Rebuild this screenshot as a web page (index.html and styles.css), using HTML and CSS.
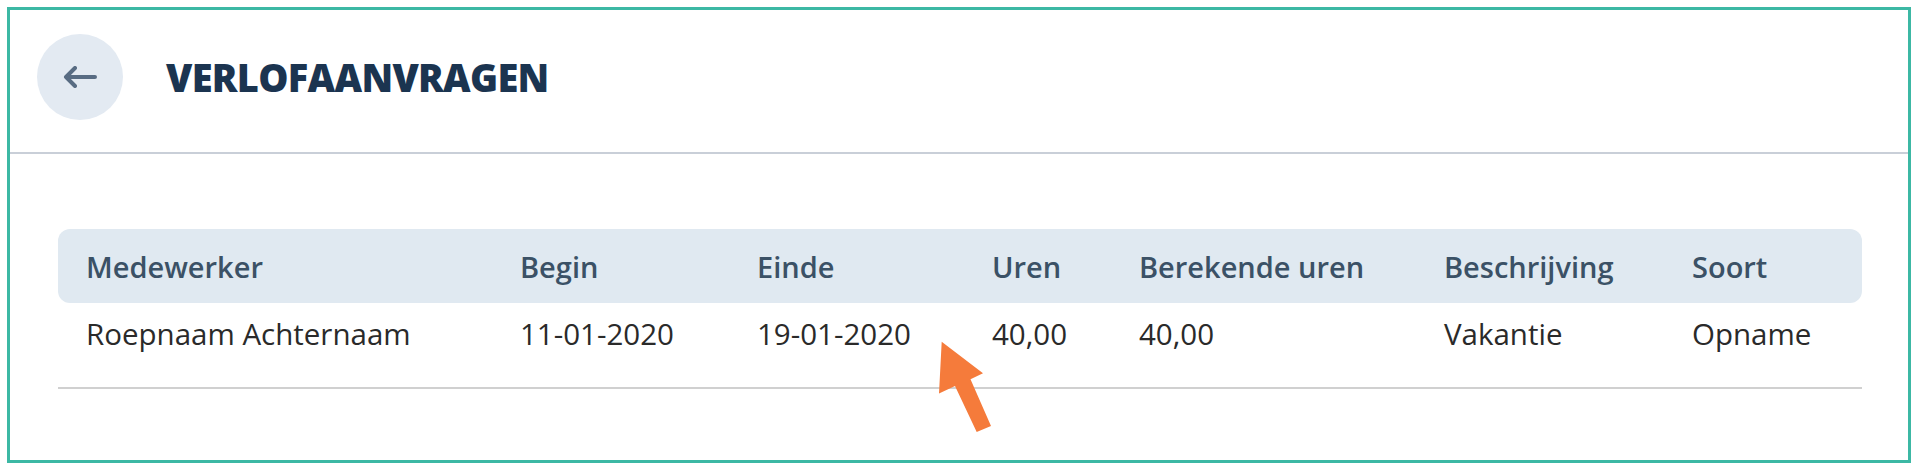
FILE: index.html
```html
<!DOCTYPE html>
<html lang="nl">
<head>
<meta charset="utf-8">
<title>Verlofaanvragen</title>
<link rel="stylesheet" href="styles.css">
</head>
<body>
<div class="frame">
  <header class="page-header">
    <button class="back-btn" aria-label="Terug">
      <svg width="34" height="22" viewBox="0 0 34 22" fill="none" stroke="#586c83" stroke-width="4" stroke-linecap="round" stroke-linejoin="round"><path d="M32 11H3M12 2L3 11L12 20"/></svg>
    </button>
    <h1 class="title">VERLOFAANVRAGEN</h1>
  </header>
  <main class="content">
    <div class="table">
      <div class="row head">
        <div class="cell">Medewerker</div>
        <div class="cell">Begin</div>
        <div class="cell">Einde</div>
        <div class="cell">Uren</div>
        <div class="cell">Berekende uren</div>
        <div class="cell">Beschrijving</div>
        <div class="cell">Soort</div>
      </div>
      <div class="row data">
        <div class="cell">Roepnaam Achternaam</div>
        <div class="cell">11-01-2020</div>
        <div class="cell">19-01-2020</div>
        <div class="cell">40,00</div>
        <div class="cell">40,00</div>
        <div class="cell">Vakantie</div>
        <div class="cell">Opname</div>
      </div>
    </div>
  </main>
  <svg class="pointer" width="70" height="105" viewBox="0 0 70 105"><polygon fill="#f57b3b" points="11.7,6.7 53,38.3 40.5,44.3 61,91 46.7,97 25,51 9,58.5"/></svg>
</div>
</body>
</html>
```

FILE: styles.css
```css
* { box-sizing: border-box; }
html, body { margin: 0; padding: 0; background: #ffffff; }
body {
  font-family: "Open Sans", "Noto Sans", sans-serif;
  padding: 7px 9px 7px 7px;
}
.frame {
  position: relative;
  height: 456px;
  border: 3px solid #3cb8a4;
  background: #ffffff;
}
.page-header {
  display: flex;
  align-items: center;
  gap: 43px;
  padding: 24px 27px 32px;
  border-bottom: 2px solid #c9cfd8;
}
.back-btn {
  width: 86px;
  height: 86px;
  border-radius: 50%;
  border: 0;
  background: #e3eaf2;
  display: flex;
  align-items: center;
  justify-content: center;
  padding: 0;
}
.title {
  margin: 0;
  font-size: 38px;
  font-weight: 800;
  letter-spacing: -0.7px;
  color: #1b3450;
  line-height: 1;
}
.content {
  padding: 75px 46px 0 48px;
}
.row {
  display: grid;
  grid-template-columns: 462px 237px 235px 147px 305px 248px 170px;
  font-size: 29px;
}
.cell:first-child { padding-left: 28px; }
.head {
  height: 74px;
  align-items: center;
  background: #e0e9f1;
  border-radius: 12px;
  font-weight: 600;
  color: #3b5166;
}
.data {
  padding: 14px 0 36px;
  line-height: 34px;
  font-size: 29.5px;
  color: #2a2a2a;
  border-bottom: 2px solid #d0d0d0;
}
.pointer {
  position: absolute;
  left: 920px;
  top: 325px;
}
```
